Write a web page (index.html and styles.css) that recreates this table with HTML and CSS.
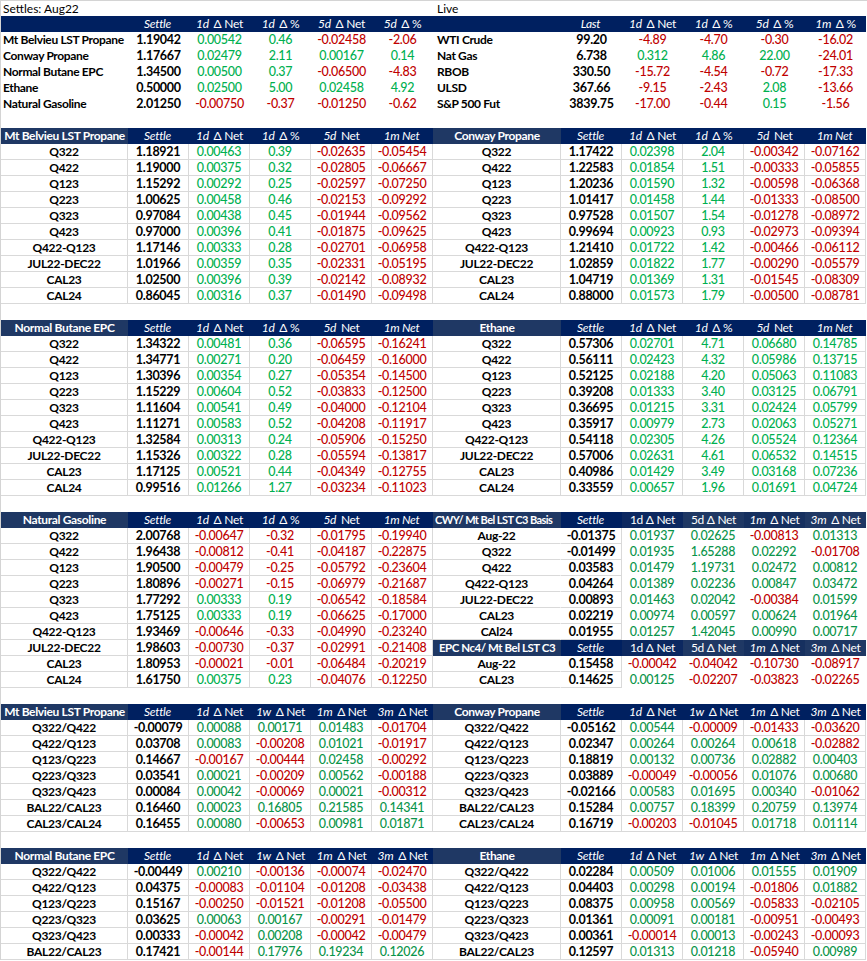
FILE: index.html
```html
<!DOCTYPE html>
<html lang="en">
<head>
<meta charset="utf-8">
<title>NGL Settles</title>
<link rel="stylesheet" href="styles.css">
</head>
<body>
<div class="page">

<section class="sec">
  <div class="t top lt">
    <div class="cap">Settles: Aug22</div>
    <span class="h"></span><span class="h"><i>Settle</i></span><span class="h"><i>1d</i> Δ Net</span><span class="h"><i>1d</i> Δ %</span><span class="h"><i>5d</i> Δ Net</span><span class="h"><i>5d</i> Δ %</span>
    <span class="l">Mt Belvieu LST Propane</span><span class="s">1.19042</span><span class="g">0.00542</span><span class="g">0.46</span><span class="r">-0.02458</span><span class="r">-2.06</span>
    <span class="l">Conway Propane</span><span class="s">1.17667</span><span class="g">0.02479</span><span class="g">2.11</span><span class="g">0.00167</span><span class="g">0.14</span>
    <span class="l">Normal Butane EPC</span><span class="s">1.34500</span><span class="g">0.00500</span><span class="g">0.37</span><span class="r">-0.06500</span><span class="r">-4.83</span>
    <span class="l">Ethane</span><span class="s">0.50000</span><span class="g">0.02500</span><span class="g">5.00</span><span class="g">0.02458</span><span class="g">4.92</span>
    <span class="l">Natural Gasoline</span><span class="s">2.01250</span><span class="r">-0.00750</span><span class="r">-0.37</span><span class="r">-0.01250</span><span class="r">-0.62</span>
  </div>
  <div class="t top rt">
    <div class="cap">Live</div>
    <span class="h"></span><span class="h"><i>Last</i></span><span class="h"><i>1d</i> Δ Net</span><span class="h"><i>1d</i> Δ %</span><span class="h"><i>5d</i> Δ %</span><span class="h"><i>1m</i> Δ %</span>
    <span class="l">WTI Crude</span><span class="s">99.20</span><span class="r">-4.89</span><span class="r">-4.70</span><span class="r">-0.30</span><span class="r">-16.02</span>
    <span class="l">Nat Gas</span><span class="s">6.738</span><span class="g">0.312</span><span class="g">4.86</span><span class="g">22.00</span><span class="r">-24.01</span>
    <span class="l">RBOB</span><span class="s">330.50</span><span class="r">-15.72</span><span class="r">-4.54</span><span class="r">-0.72</span><span class="r">-17.33</span>
    <span class="l">ULSD</span><span class="s">367.66</span><span class="r">-9.15</span><span class="r">-2.43</span><span class="g">2.08</span><span class="r">-13.66</span>
    <span class="l">S&amp;P 500 Fut</span><span class="s">3839.75</span><span class="r">-17.00</span><span class="r">-0.44</span><span class="g">0.15</span><span class="r">-1.56</span>
  </div>
</section>

<section class="sec">
  <div class="t lt">
    <span class="h hl">Mt Belvieu LST Propane</span><span class="h"><i>Settle</i></span><span class="h"><i>1d</i> Δ Net</span><span class="h"><i>1d</i> Δ %</span><span class="h"><i>5d</i> Net</span><span class="h"><i>1m Net</i></span>
    <span class="l">Q322</span><span class="s">1.18921</span><span class="g">0.00463</span><span class="g">0.39</span><span class="r">-0.02635</span><span class="r">-0.05454</span>
    <span class="l">Q422</span><span class="s">1.19000</span><span class="g">0.00375</span><span class="g">0.32</span><span class="r">-0.02805</span><span class="r">-0.06667</span>
    <span class="l">Q123</span><span class="s">1.15292</span><span class="g">0.00292</span><span class="g">0.25</span><span class="r">-0.02597</span><span class="r">-0.07250</span>
    <span class="l">Q223</span><span class="s">1.00625</span><span class="g">0.00458</span><span class="g">0.46</span><span class="r">-0.02153</span><span class="r">-0.09292</span>
    <span class="l">Q323</span><span class="s">0.97084</span><span class="g">0.00438</span><span class="g">0.45</span><span class="r">-0.01944</span><span class="r">-0.09562</span>
    <span class="l">Q423</span><span class="s">0.97000</span><span class="g">0.00396</span><span class="g">0.41</span><span class="r">-0.01875</span><span class="r">-0.09625</span>
    <span class="l">Q422-Q123</span><span class="s">1.17146</span><span class="g">0.00333</span><span class="g">0.28</span><span class="r">-0.02701</span><span class="r">-0.06958</span>
    <span class="l">JUL22-DEC22</span><span class="s">1.01966</span><span class="g">0.00359</span><span class="g">0.35</span><span class="r">-0.02331</span><span class="r">-0.05195</span>
    <span class="l">CAL23</span><span class="s">1.02500</span><span class="g">0.00396</span><span class="g">0.39</span><span class="r">-0.02142</span><span class="r">-0.08932</span>
    <span class="l">CAL24</span><span class="s">0.86045</span><span class="g">0.00316</span><span class="g">0.37</span><span class="r">-0.01490</span><span class="r">-0.09498</span>
  </div>
  <div class="t rt">
    <span class="h hl">Conway Propane</span><span class="h"><i>Settle</i></span><span class="h"><i>1d</i> Δ Net</span><span class="h"><i>1d</i> Δ %</span><span class="h"><i>5d</i> Net</span><span class="h"><i>1m Net</i></span>
    <span class="l">Q322</span><span class="s">1.17422</span><span class="g">0.02398</span><span class="g">2.04</span><span class="r">-0.00342</span><span class="r">-0.07162</span>
    <span class="l">Q422</span><span class="s">1.22583</span><span class="g">0.01854</span><span class="g">1.51</span><span class="r">-0.00333</span><span class="r">-0.05855</span>
    <span class="l">Q123</span><span class="s">1.20236</span><span class="g">0.01590</span><span class="g">1.32</span><span class="r">-0.00598</span><span class="r">-0.06368</span>
    <span class="l">Q223</span><span class="s">1.01417</span><span class="g">0.01458</span><span class="g">1.44</span><span class="r">-0.01333</span><span class="r">-0.08500</span>
    <span class="l">Q323</span><span class="s">0.97528</span><span class="g">0.01507</span><span class="g">1.54</span><span class="r">-0.01278</span><span class="r">-0.08972</span>
    <span class="l">Q423</span><span class="s">0.99694</span><span class="g">0.00923</span><span class="g">0.93</span><span class="r">-0.02973</span><span class="r">-0.09394</span>
    <span class="l">Q422-Q123</span><span class="s">1.21410</span><span class="g">0.01722</span><span class="g">1.42</span><span class="r">-0.00466</span><span class="r">-0.06112</span>
    <span class="l">JUL22-DEC22</span><span class="s">1.02859</span><span class="g">0.01822</span><span class="g">1.77</span><span class="r">-0.00290</span><span class="r">-0.05579</span>
    <span class="l">CAL23</span><span class="s">1.04719</span><span class="g">0.01369</span><span class="g">1.31</span><span class="r">-0.01545</span><span class="r">-0.08309</span>
    <span class="l">CAL24</span><span class="s">0.88000</span><span class="g">0.01573</span><span class="g">1.79</span><span class="r">-0.00500</span><span class="r">-0.08781</span>
  </div>
</section>

<section class="sec">
  <div class="t lt">
    <span class="h hl">Normal Butane EPC</span><span class="h"><i>Settle</i></span><span class="h"><i>1d</i> Δ Net</span><span class="h"><i>1d</i> Δ %</span><span class="h"><i>5d</i> Net</span><span class="h"><i>1m Net</i></span>
    <span class="l">Q322</span><span class="s">1.34322</span><span class="g">0.00481</span><span class="g">0.36</span><span class="r">-0.06595</span><span class="r">-0.16241</span>
    <span class="l">Q422</span><span class="s">1.34771</span><span class="g">0.00271</span><span class="g">0.20</span><span class="r">-0.06459</span><span class="r">-0.16000</span>
    <span class="l">Q123</span><span class="s">1.30396</span><span class="g">0.00354</span><span class="g">0.27</span><span class="r">-0.05354</span><span class="r">-0.14500</span>
    <span class="l">Q223</span><span class="s">1.15229</span><span class="g">0.00604</span><span class="g">0.52</span><span class="r">-0.03833</span><span class="r">-0.12500</span>
    <span class="l">Q323</span><span class="s">1.11604</span><span class="g">0.00541</span><span class="g">0.49</span><span class="r">-0.04000</span><span class="r">-0.12104</span>
    <span class="l">Q423</span><span class="s">1.11271</span><span class="g">0.00583</span><span class="g">0.52</span><span class="r">-0.04208</span><span class="r">-0.11917</span>
    <span class="l">Q422-Q123</span><span class="s">1.32584</span><span class="g">0.00313</span><span class="g">0.24</span><span class="r">-0.05906</span><span class="r">-0.15250</span>
    <span class="l">JUL22-DEC22</span><span class="s">1.15326</span><span class="g">0.00322</span><span class="g">0.28</span><span class="r">-0.05594</span><span class="r">-0.13817</span>
    <span class="l">CAL23</span><span class="s">1.17125</span><span class="g">0.00521</span><span class="g">0.44</span><span class="r">-0.04349</span><span class="r">-0.12755</span>
    <span class="l">CAL24</span><span class="s">0.99516</span><span class="g">0.01266</span><span class="g">1.27</span><span class="r">-0.03234</span><span class="r">-0.11023</span>
  </div>
  <div class="t rt">
    <span class="h hl">Ethane</span><span class="h"><i>Settle</i></span><span class="h"><i>1d</i> Δ Net</span><span class="h"><i>1d</i> Δ %</span><span class="h"><i>5d</i> Net</span><span class="h"><i>1m Net</i></span>
    <span class="l">Q322</span><span class="s">0.57306</span><span class="g">0.02701</span><span class="g">4.71</span><span class="g">0.06680</span><span class="g">0.14785</span>
    <span class="l">Q422</span><span class="s">0.56111</span><span class="g">0.02423</span><span class="g">4.32</span><span class="g">0.05986</span><span class="g">0.13715</span>
    <span class="l">Q123</span><span class="s">0.52125</span><span class="g">0.02188</span><span class="g">4.20</span><span class="g">0.05063</span><span class="g">0.11083</span>
    <span class="l">Q223</span><span class="s">0.39208</span><span class="g">0.01333</span><span class="g">3.40</span><span class="g">0.03125</span><span class="g">0.06791</span>
    <span class="l">Q323</span><span class="s">0.36695</span><span class="g">0.01215</span><span class="g">3.31</span><span class="g">0.02424</span><span class="g">0.05799</span>
    <span class="l">Q423</span><span class="s">0.35917</span><span class="g">0.00979</span><span class="g">2.73</span><span class="g">0.02063</span><span class="g">0.05271</span>
    <span class="l">Q422-Q123</span><span class="s">0.54118</span><span class="g">0.02305</span><span class="g">4.26</span><span class="g">0.05524</span><span class="g">0.12364</span>
    <span class="l">JUL22-DEC22</span><span class="s">0.57006</span><span class="g">0.02631</span><span class="g">4.61</span><span class="g">0.06532</span><span class="g">0.14515</span>
    <span class="l">CAL23</span><span class="s">0.40986</span><span class="g">0.01429</span><span class="g">3.49</span><span class="g">0.03168</span><span class="g">0.07236</span>
    <span class="l">CAL24</span><span class="s">0.33559</span><span class="g">0.00657</span><span class="g">1.96</span><span class="g">0.01691</span><span class="g">0.04724</span>
  </div>
</section>

<section class="sec">
  <div class="t lt">
    <span class="h hl">Natural Gasoline</span><span class="h"><i>Settle</i></span><span class="h"><i>1d</i> Δ Net</span><span class="h"><i>1d</i> Δ %</span><span class="h"><i>5d</i> Net</span><span class="h"><i>1m Net</i></span>
    <span class="l">Q322</span><span class="s">2.00768</span><span class="r">-0.00647</span><span class="r">-0.32</span><span class="r">-0.01795</span><span class="r">-0.19940</span>
    <span class="l">Q422</span><span class="s">1.96438</span><span class="r">-0.00812</span><span class="r">-0.41</span><span class="r">-0.04187</span><span class="r">-0.22875</span>
    <span class="l">Q123</span><span class="s">1.90500</span><span class="r">-0.00479</span><span class="r">-0.25</span><span class="r">-0.05792</span><span class="r">-0.23604</span>
    <span class="l">Q223</span><span class="s">1.80896</span><span class="r">-0.00271</span><span class="r">-0.15</span><span class="r">-0.06979</span><span class="r">-0.21687</span>
    <span class="l">Q323</span><span class="s">1.77292</span><span class="g">0.00333</span><span class="g">0.19</span><span class="r">-0.06542</span><span class="r">-0.18584</span>
    <span class="l">Q423</span><span class="s">1.75125</span><span class="g">0.00333</span><span class="g">0.19</span><span class="r">-0.06625</span><span class="r">-0.17000</span>
    <span class="l">Q422-Q123</span><span class="s">1.93469</span><span class="r">-0.00646</span><span class="r">-0.33</span><span class="r">-0.04990</span><span class="r">-0.23240</span>
    <span class="l">JUL22-DEC22</span><span class="s">1.98603</span><span class="r">-0.00730</span><span class="r">-0.37</span><span class="r">-0.02991</span><span class="r">-0.21408</span>
    <span class="l">CAL23</span><span class="s">1.80953</span><span class="r">-0.00021</span><span class="r">-0.01</span><span class="r">-0.06484</span><span class="r">-0.20219</span>
    <span class="l">CAL24</span><span class="s">1.61750</span><span class="g">0.00375</span><span class="g">0.23</span><span class="r">-0.04076</span><span class="r">-0.12250</span>
  </div>
  <div class="t rt basis dk">
    <span class="h hl hll">CWY/ Mt Bel LST C3 Basis</span><span class="h"><i>Settle</i></span><span class="h hb">1d Δ Net</span><span class="h hc">5d Δ Net</span><span class="h hd"><i>1m</i> Δ Net</span><span class="h hc"><i>3m</i> Δ Net</span>
    <span class="l">Aug-22</span><span class="s">-0.01375</span><span class="g">0.01937</span><span class="g">0.02625</span><span class="r">-0.00813</span><span class="g">0.01313</span>
    <span class="l">Q322</span><span class="s">-0.01499</span><span class="g">0.01935</span><span class="g">1.65288</span><span class="g">0.02292</span><span class="r">-0.01708</span>
    <span class="l">Q422</span><span class="s">0.03583</span><span class="g">0.01479</span><span class="g">1.19731</span><span class="g">0.02472</span><span class="g">0.00812</span>
    <span class="l">Q422-Q123</span><span class="s">0.04264</span><span class="g">0.01389</span><span class="g">0.02236</span><span class="g">0.00847</span><span class="g">0.03472</span>
    <span class="l">JUL22-DEC22</span><span class="s">0.00893</span><span class="g">0.01463</span><span class="g">0.02042</span><span class="r">-0.00384</span><span class="g">0.01599</span>
    <span class="l">CAL23</span><span class="s">0.02219</span><span class="g">0.00974</span><span class="g">0.00597</span><span class="g">0.00624</span><span class="g">0.01964</span>
    <span class="l">CAl24</span><span class="s">0.01955</span><span class="g">0.01257</span><span class="g">1.42045</span><span class="g">0.00990</span><span class="g">0.00717</span>
    <span class="h hl hle">EPC Nc4/ Mt Bel LST C3</span><span class="h"><i>Settle</i></span><span class="h hb">1d Δ Net</span><span class="h hc">5d Δ Net</span><span class="h hd"><i>1m</i> Δ Net</span><span class="h hc"><i>3m</i> Δ Net</span>
    <span class="l">Aug-22</span><span class="s">0.15458</span><span class="r">-0.00042</span><span class="r">-0.04042</span><span class="r">-0.10730</span><span class="r">-0.08917</span>
    <span class="l">CAL23</span><span class="s">0.14625</span><span class="g">0.00125</span><span class="r">-0.02207</span><span class="r">-0.03823</span><span class="r">-0.02265</span>
  </div>
</section>

<section class="sec dk">
  <div class="t lt">
    <span class="h hl">Mt Belvieu LST Propane</span><span class="h"><i>Settle</i></span><span class="h"><i>1d</i> Δ Net</span><span class="h"><i>1w</i> Δ Net</span><span class="h"><i>1m</i> Δ Net</span><span class="h"><i>3m</i> Δ Net</span>
    <span class="l">Q322/Q422</span><span class="s">-0.00079</span><span class="g">0.00088</span><span class="g">0.00171</span><span class="g">0.01483</span><span class="r">-0.01704</span>
    <span class="l">Q422/Q123</span><span class="s">0.03708</span><span class="g">0.00083</span><span class="r">-0.00208</span><span class="g">0.01021</span><span class="r">-0.01917</span>
    <span class="l">Q123/Q223</span><span class="s">0.14667</span><span class="r">-0.00167</span><span class="r">-0.00444</span><span class="g">0.02458</span><span class="r">-0.00292</span>
    <span class="l">Q223/Q323</span><span class="s">0.03541</span><span class="g">0.00021</span><span class="r">-0.00209</span><span class="g">0.00562</span><span class="r">-0.00188</span>
    <span class="l">Q323/Q423</span><span class="s">0.00084</span><span class="g">0.00042</span><span class="r">-0.00069</span><span class="g">0.00021</span><span class="r">-0.00312</span>
    <span class="l">BAL22/CAL23</span><span class="s">0.16460</span><span class="g">0.00023</span><span class="g">0.16805</span><span class="g">0.21585</span><span class="g">0.14341</span>
    <span class="l">CAL23/CAL24</span><span class="s">0.16455</span><span class="g">0.00080</span><span class="r">-0.00653</span><span class="g">0.00981</span><span class="g">0.01871</span>
  </div>
  <div class="t rt">
    <span class="h hl">Conway Propane</span><span class="h"><i>Settle</i></span><span class="h"><i>1d</i> Δ Net</span><span class="h"><i>1w</i> Δ Net</span><span class="h"><i>1m</i> Δ Net</span><span class="h"><i>3m</i> Δ Net</span>
    <span class="l">Q322/Q422</span><span class="s">-0.05162</span><span class="g">0.00544</span><span class="r">-0.00009</span><span class="r">-0.01433</span><span class="r">-0.03620</span>
    <span class="l">Q422/Q123</span><span class="s">0.02347</span><span class="g">0.00264</span><span class="g">0.00264</span><span class="g">0.00618</span><span class="r">-0.02882</span>
    <span class="l">Q123/Q223</span><span class="s">0.18819</span><span class="g">0.00132</span><span class="g">0.00736</span><span class="g">0.02882</span><span class="g">0.00403</span>
    <span class="l">Q223/Q323</span><span class="s">0.03889</span><span class="r">-0.00049</span><span class="r">-0.00056</span><span class="g">0.01076</span><span class="g">0.00680</span>
    <span class="l">Q323/Q423</span><span class="s">-0.02166</span><span class="g">0.00583</span><span class="g">0.01695</span><span class="g">0.00340</span><span class="r">-0.01062</span>
    <span class="l">BAL22/CAL23</span><span class="s">0.15284</span><span class="g">0.00757</span><span class="g">0.18399</span><span class="g">0.20759</span><span class="g">0.13974</span>
    <span class="l">CAL23/CAL24</span><span class="s">0.16719</span><span class="r">-0.00203</span><span class="r">-0.01045</span><span class="g">0.01718</span><span class="g">0.01114</span>
  </div>
</section>

<section class="sec dk">
  <div class="t lt">
    <span class="h hl">Normal Butane EPC</span><span class="h"><i>Settle</i></span><span class="h"><i>1d</i> Δ Net</span><span class="h"><i>1w</i> Δ Net</span><span class="h"><i>1m</i> Δ Net</span><span class="h"><i>3m</i> Δ Net</span>
    <span class="l">Q322/Q422</span><span class="s">-0.00449</span><span class="g">0.00210</span><span class="r">-0.00136</span><span class="r">-0.00074</span><span class="r">-0.02470</span>
    <span class="l">Q422/Q123</span><span class="s">0.04375</span><span class="r">-0.00083</span><span class="r">-0.01104</span><span class="r">-0.01208</span><span class="r">-0.03438</span>
    <span class="l">Q123/Q223</span><span class="s">0.15167</span><span class="r">-0.00250</span><span class="r">-0.01521</span><span class="r">-0.01208</span><span class="r">-0.05500</span>
    <span class="l">Q223/Q323</span><span class="s">0.03625</span><span class="g">0.00063</span><span class="g">0.00167</span><span class="r">-0.00291</span><span class="r">-0.01479</span>
    <span class="l">Q323/Q423</span><span class="s">0.00333</span><span class="r">-0.00042</span><span class="g">0.00208</span><span class="r">-0.00042</span><span class="r">-0.00479</span>
    <span class="l">BAL22/CAL23</span><span class="s">0.17421</span><span class="r">-0.00144</span><span class="g">0.17976</span><span class="g">0.19234</span><span class="g">0.12026</span>
  </div>
  <div class="t rt">
    <span class="h hl">Ethane</span><span class="h"><i>Settle</i></span><span class="h"><i>1d</i> Δ Net</span><span class="h"><i>1w</i> Δ Net</span><span class="h"><i>1m</i> Δ Net</span><span class="h"><i>3m</i> Δ Net</span>
    <span class="l">Q322/Q422</span><span class="s">0.02284</span><span class="g">0.00509</span><span class="g">0.01006</span><span class="g">0.01555</span><span class="g">0.01909</span>
    <span class="l">Q422/Q123</span><span class="s">0.04403</span><span class="g">0.00298</span><span class="g">0.00194</span><span class="r">-0.01806</span><span class="g">0.01882</span>
    <span class="l">Q123/Q223</span><span class="s">0.08375</span><span class="g">0.00958</span><span class="g">0.00569</span><span class="r">-0.05833</span><span class="r">-0.02105</span>
    <span class="l">Q223/Q323</span><span class="s">0.01361</span><span class="g">0.00091</span><span class="g">0.00181</span><span class="r">-0.00951</span><span class="r">-0.00493</span>
    <span class="l">Q323/Q423</span><span class="s">0.00361</span><span class="r">-0.00014</span><span class="g">0.00013</span><span class="r">-0.00243</span><span class="r">-0.00093</span>
    <span class="l">BAL22/CAL23</span><span class="s">0.12597</span><span class="g">0.01313</span><span class="g">0.01218</span><span class="r">-0.05940</span><span class="g">0.00989</span>
  </div>
</section>

</div>
</body>
</html>
```

FILE: styles.css
```css
* {
  box-sizing: border-box;
  margin: 0;
  padding: 0;
}

body {
  margin: 0;
  background: #ffffff;
  font-family: Lato, "Liberation Sans", sans-serif;
  font-size: 12px;
  color: #000000;
}

.page {
  width: 867px;
  border-top: 1px solid #d4d4d4;
  border-left: 1px solid #d4d4d4;
}

.sec {
  display: flex;
}

.sec + .sec {
  margin-top: 16px;
}

.t {
  display: grid;
  grid-auto-rows: 16px;
  font-size: 12.5px;
  letter-spacing: -0.3px;
}

.t.lt {
  grid-template-columns: 127px repeat(5, 61px);
}

.t.rt {
  grid-template-columns: 128px repeat(5, 61px);
}

.t.top {
  grid-template-rows: 15px;
}

.cap {
  grid-column: 1 / -1;
  font-size: 12px;
  letter-spacing: 0;
  line-height: 15px;
  padding-left: 2px;
  white-space: nowrap;
}

.rt .cap {
  padding-left: 4px;
}

.t > span {
  display: block;
  text-align: center;
  white-space: nowrap;
  overflow: hidden;
  line-height: 15px;
  font-weight: 500;
  border-right: 1px solid #d9d9d9;
  border-bottom: 1px solid #d9d9d9;
}

.t > span.h {
  background: #002060;
  color: #ffffff;
  font-size: 12px;
  font-weight: 400;
  line-height: 16px;
  border: none;
}

.t > span.hl {
  background: #1f3864;
  font-weight: 700;
  letter-spacing: -0.35px;
}

.h i {
  font-style: italic;
  margin-right: 2px;
}

.t > span.l,
.t > span.s {
  font-weight: 700;
}

.t > span.l {
  font-size: 12px;
}

.g {
  color: #00b050;
}

.r {
  color: #c00000;
}

.dk .g {
  color: #0a944a;
}

/* top summary tables */
.top > span {
  border: none;
}

.top > span.l {
  text-align: left;
  padding-left: 2px;
  letter-spacing: -0.35px;
}

.top.rt > span.l {
  padding-left: 4px;
}

.top > span:not(.h) {
  border: none;
  line-height: 16px;
}

/* basis / spread table */
.basis > span:not(.l):not(.s):not(.h) {
  border-color: transparent;
}

.basis > span.l {
  border-right-color: #ffffff;
}

.t > span.hll {
  text-align: left;
  padding-left: 2px;
  font-size: 11px;
  letter-spacing: -0.55px;
}

.t > span.hle {
  font-size: 11.5px;
  letter-spacing: -0.45px;
}

.t > span.hb {
  background: #0c2860;
}

.t > span.hc {
  background: #1f3864;
}

.t > span.hd {
  background: #16305f;
}
```
